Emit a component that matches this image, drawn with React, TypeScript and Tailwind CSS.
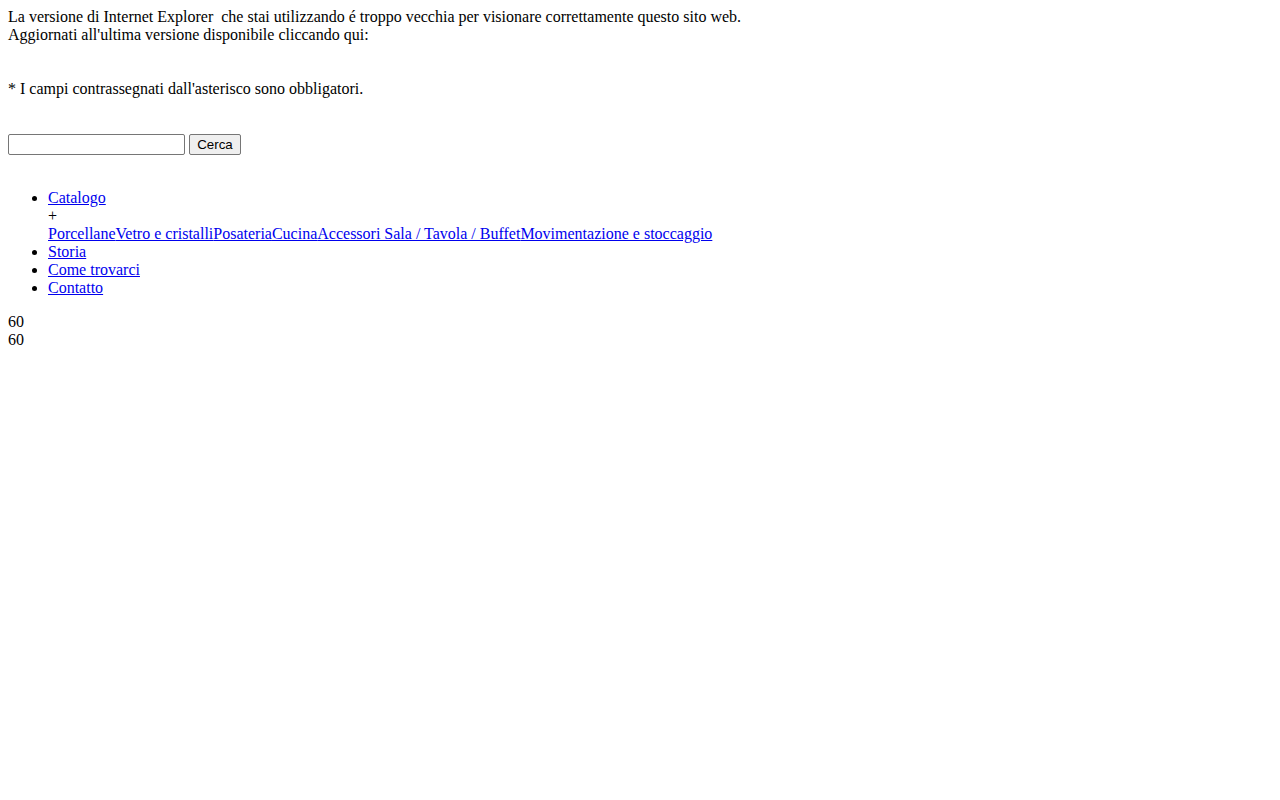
export default function App() {
  const categories = [
    'Porcellane',
    'Vetro e cristalli',
    'Posateria',
    'Cucina',
    'Accessori Sala / Tavola / Buffet',
    'Movimentazione e stoccaggio',
  ]

  return (
    <div className="min-h-screen bg-white p-2 text-black text-[16px] leading-[18px] font-['Liberation_Serif','Times_New_Roman',serif]">
      {/* browser warning */}
      <div>
        <div>La versione di Internet Explorer&nbsp; che stai utilizzando é troppo vecchia per visionare correttamente questo sito web.</div>
        <div>Aggiornati all'ultima versione disponibile cliccando qui:</div>
      </div>

      <p className="mt-9">* I campi contrassegnati dall'asterisco sono obbligatori.</p>

      {/* search */}
      <form className="mt-9 flex items-center gap-1" onSubmit={(e) => e.preventDefault()}>
        <input
          type="text"
          className="h-[21px] w-[177px] rounded-[2px] border border-[#767676] bg-white px-0.5 text-[13px]"
        />
        <button
          type="submit"
          className="h-[21px] w-[52px] rounded-[2px] border border-[#767676] bg-[#efefef] text-[13.33px] leading-none font-['Liberation_Sans',Arial,sans-serif]"
        >
          Cerca
        </button>
      </form>

      {/* main menu */}
      <ul className="mt-[34px] list-disc pl-10">
        <li>
          <a href="#" className="text-[#0000ee] underline">Catalogo</a>
          <div>+</div>
          <div>
            {categories.map((c) => (
              <a key={c} href="#" className="text-[#0000ee] underline">{c}</a>
            ))}
          </div>
        </li>
        <li><a href="#" className="text-[#0000ee] underline">Storia</a></li>
        <li><a href="#" className="text-[#0000ee] underline">Come trovarci</a></li>
        <li><a href="#" className="text-[#0000ee] underline">Contatto</a></li>
      </ul>

      <div className="mt-4">
        <div>60</div>
        <div>60</div>
      </div>
    </div>
  )
}
